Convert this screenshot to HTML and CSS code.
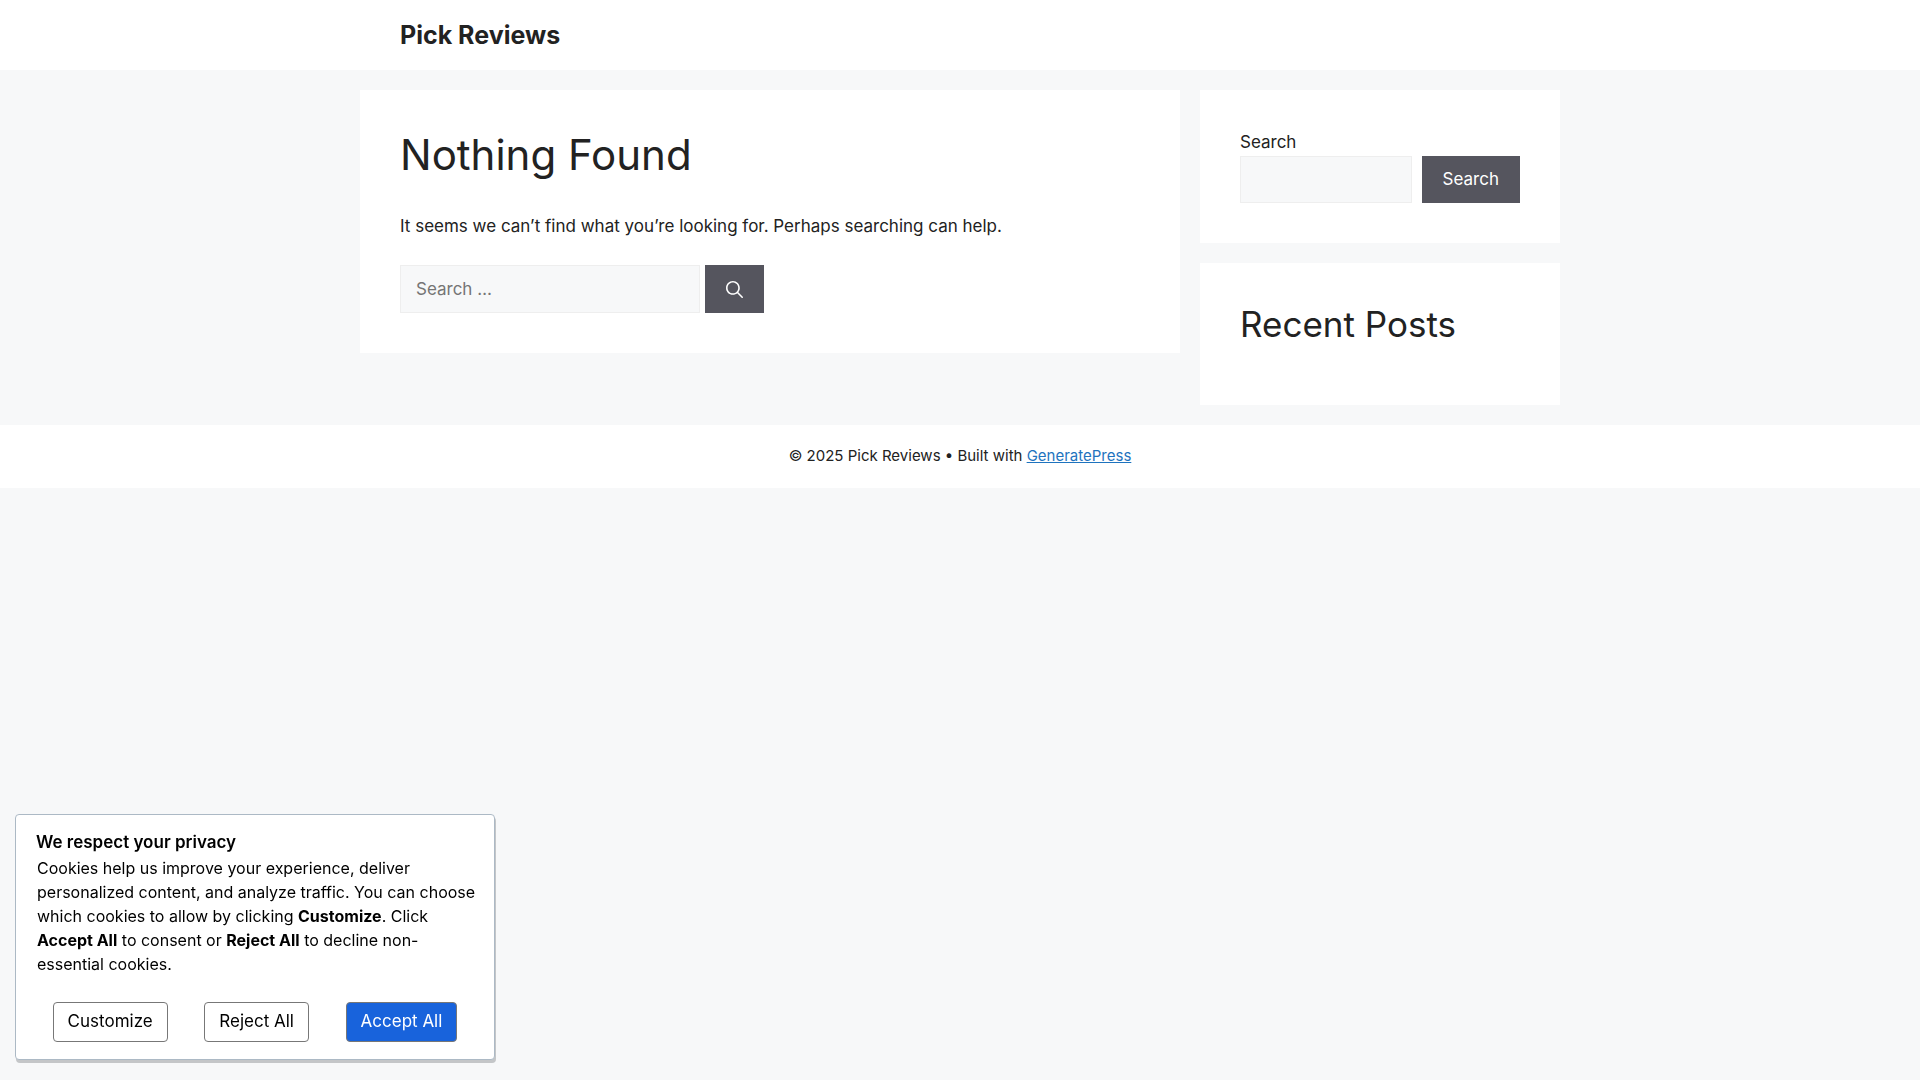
FILE: index.html
```html
<!DOCTYPE html>
<html lang="en-US">
<head>
  <meta charset="UTF-8">
  <meta name="viewport" content="width=device-width, initial-scale=1">
  <title>Pick Reviews</title>
  <link rel="stylesheet" href="styles.css">
</head>
<body>

<!-- Header -->
<header class="site-header">
  <div class="inside-header">
    <p class="main-title"><a href="#">Pick Reviews</a></p>
  </div>
</header>

<!-- Content -->
<div class="site-content">
  <main class="content-area">
    <h1 class="page-title">Nothing Found</h1>
    <p class="page-text">It seems we can’t find what you’re looking for. Perhaps searching can help.</p>
    <form class="search-form">
      <input type="search" class="search-field" placeholder="Search …" aria-label="Search for:">
      <button type="submit" class="search-submit" aria-label="Search">
        <svg class="search-icon" viewBox="0 0 512 512" aria-hidden="true">
          <path fill-rule="evenodd" clip-rule="evenodd" d="M208 48c-88.366 0-160 71.634-160 160s71.634 160 160 160 160-71.634 160-160S296.366 48 208 48zM0 208C0 93.125 93.125 0 208 0s208 93.125 208 208c0 48.741-16.765 93.566-44.843 129.024l133.826 134.018c9.366 9.379 9.355 24.575-.025 33.941-9.379 9.366-24.575 9.355-33.941-.025L337.238 370.987C301.747 399.167 256.839 416 208 416 93.125 416 0 322.875 0 208z"/>
        </svg>
      </button>
    </form>
  </main>

  <aside class="sidebar">
    <section class="widget">
      <form>
        <label class="widget-label" for="widget-search">Search</label>
        <div class="widget-row">
          <input type="search" id="widget-search" class="search-field">
          <button type="submit" class="search-submit">Search</button>
        </div>
      </form>
    </section>
    <section class="widget">
      <h2 class="widget-title">Recent Posts</h2>
    </section>
  </aside>
</div>

<!-- Footer -->
<footer class="site-info">
  © 2025 Pick Reviews • Built with <a href="#">GeneratePress</a>
</footer>

<!-- Cookie notice -->
<div class="cookie-notice" role="dialog" aria-labelledby="cookie-title">
  <p class="cookie-title" id="cookie-title">We respect your privacy</p>
  <p class="cookie-text">Cookies help us improve your experience, deliver personalized content, and analyze traffic. You can choose which cookies to allow by clicking <strong>Customize</strong>. Click <strong>Accept All</strong> to consent or <strong>Reject All</strong> to decline non-essential cookies.</p>
  <div class="cookie-buttons">
    <button type="button" class="cookie-btn">Customize</button>
    <button type="button" class="cookie-btn">Reject All</button>
    <button type="button" class="cookie-btn cookie-accept">Accept All</button>
  </div>
</div>

</body>
</html>
```

FILE: styles.css
```css
* {
  box-sizing: border-box;
}
body {
  margin: 0;
  background-color: #f7f8f9;
  color: #222222;
  font-family: Inter, sans-serif;
  font-size: 17px;
  line-height: 25px;
}
h1, h2, p {
  margin: 0;
  font-weight: 400;
}
input, button {
  font-family: inherit;
  font-size: 17px;
  line-height: 25px;
}
button {
  cursor: pointer;
}

/* Header */
.site-header {
  background-color: #fff;
}
.inside-header {
  max-width: 1200px;
  margin: 0 auto;
  padding: 20px 40px;
}
.main-title {
  font-size: 25px;
  line-height: 30px;
  font-weight: bold;
}
.main-title a {
  color: #222222;
  text-decoration: none;
}

/* Content */
.site-content {
  display: flex;
  align-items: flex-start;
  gap: 20px;
  max-width: 1200px;
  margin: 0 auto;
  padding: 20px 0;
}
.content-area {
  flex: 1;
  padding: 40px;
  background-color: #fff;
}
.page-title {
  margin-bottom: 34px;
  font-size: 42px;
  line-height: 50px;
}
.page-text {
  margin-bottom: 26px;
}
.search-form {
  display: flex;
  gap: 5px;
  min-height: 48px;
}
.search-form .search-field {
  width: 300px;
}
.search-field {
  min-width: 0;
  padding: 10px 15px;
  border: 1px solid #eeeeee;
  border-radius: 0;
  background-color: #f7f8f9;
  color: #222222;
}
.search-field::placeholder {
  color: #757575;
}
.search-submit {
  display: flex;
  align-items: center;
  justify-content: center;
  padding: 10px 21px;
  border: 0;
  background-color: #55555e;
  color: #fff;
}
.search-icon {
  width: 17px;
  height: 17px;
  fill: currentColor;
}

/* Sidebar */
.sidebar {
  display: flex;
  flex-direction: column;
  gap: 20px;
  width: 30%;
}
.widget {
  padding: 40px;
  background-color: #fff;
}
.widget-label {
  display: block;
  margin-bottom: 1px;
}
.widget-row {
  display: flex;
  gap: 10px;
}
.widget-row .search-field {
  flex: 1;
}
.widget-title {
  margin-bottom: 20px;
  font-size: 35px;
  line-height: 42px;
}

/* Footer */
.site-info {
  padding: 20px 20px 21px;
  background-color: #fff;
  font-size: 15px;
  line-height: 22px;
  text-align: center;
}
.site-info a {
  color: #1e73be;
}

/* Cookie notice */
.cookie-notice {
  position: fixed;
  left: 15px;
  bottom: 20px;
  width: 480px;
  max-width: 90%;
  padding: 15px 0 17px;
  border: 1px solid #acb9c5;
  border-radius: 4px;
  background-color: #fff;
  box-shadow: 1px 3px 0 #c4c6c8;
  color: #000;
}
.cookie-title {
  margin-bottom: 1px;
  padding: 0 20px;
  font-weight: 600;
}
.cookie-text {
  padding: 0 12px 0 21px;
  font-size: 16px;
  line-height: 24px;
}
.cookie-buttons {
  display: flex;
  justify-content: space-evenly;
  margin-top: 26px;
}
.cookie-btn {
  padding: 6px 14px 7px;
  border: 1px solid #777777;
  border-radius: 4px;
  background-color: #fff;
  color: #000;
}
.cookie-accept {
  background-color: #1863dc;
  color: #fff;
}
```
